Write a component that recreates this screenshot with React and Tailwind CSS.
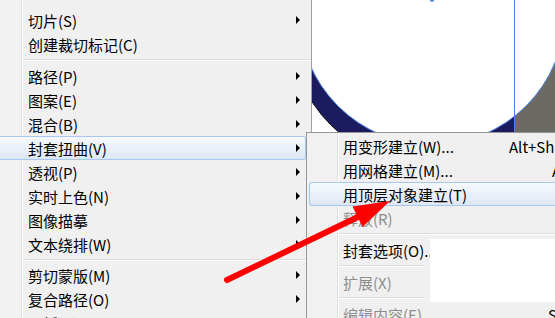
import React from "react";

function Arrow() {
  return <span className="block w-0 h-0 border-y-[4px] border-y-transparent border-l-[4px] border-l-black" />;
}

function MainRow({ label, arrow, hl }) {
  if (hl) {
    return (
      <div className="flex items-center justify-between h-6 pl-[28px] pr-[5px] mr-[5px] border border-l-0 border-[#a9c8ef] rounded-r-[3px] bg-[linear-gradient(to_bottom,#f6f9fd,#dde8f6)]">
        <span className="whitespace-nowrap">{label}</span>
        {arrow && <Arrow />}
      </div>
    );
  }
  return (
    <div className="flex items-center justify-between h-6 pl-[28px] pr-[6px] mr-[5px]">
      <span className="whitespace-nowrap">{label}</span>
      {arrow && <Arrow />}
    </div>
  );
}

function MainSep({ h }) {
  return (
    <div className={`ml-[24px] flex flex-col justify-center ${h === 7 ? "h-[7px]" : "h-[8px]"}`}>
      <div className="h-px bg-[#dcdcdc]" />
      <div className="h-px bg-white" />
    </div>
  );
}

export default function App() {
  return (
    <div className="relative w-[555px] h-[318px] overflow-hidden bg-white flex font-['Noto_Sans_CJK_SC',sans-serif] text-[15px] leading-none text-black">
      {/* main menu */}
      <div className="w-[312px] h-full shrink-0 border-r border-[#a0a0a0] pt-2 bg-[linear-gradient(to_right,#f1f1f1_21px,#e2e3e3_21px,#e2e3e3_22px,#ffffff_22px,#ffffff_23px,#f0f0f0_23px)]">
        <MainRow label="切片(S)" arrow />
        <MainRow label="创建裁切标记(C)" />
        <MainSep />
        <MainRow label="路径(P)" arrow />
        <MainRow label="图案(E)" arrow />
        <MainRow label="混合(B)" arrow />
        <MainRow label="封套扭曲(V)" arrow hl />
        <MainRow label="透视(P)" arrow />
        <MainRow label="实时上色(N)" arrow />
        <MainRow label="图像描摹" arrow />
        <MainRow label="文本绕排(W)" arrow />
        <MainSep h={7} />
        <MainRow label="剪切蒙版(M)" arrow />
        <MainRow label="复合路径(O)" arrow />
        <MainRow label="画板(A)" arrow />
      </div>

      {/* canvas */}
      <div className="flex-1 h-full bg-white">
        <svg width="243" height="318" viewBox="312 0 243 318" className="block">
          <circle cx="432" cy="24" r="143" fill="#1b1b5e" stroke="#111111" strokeWidth="1" />
          <rect x="514" y="0" width="41" height="140" fill="#6b6a65" />
          <circle cx="432" cy="12" r="133" fill="#ffffff" stroke="#4a7fe6" strokeWidth="1" />
          <line x1="514.5" y1="0" x2="514.5" y2="140" stroke="#4a80f0" strokeWidth="1" />
          <rect x="430" y="0" width="4" height="1.5" fill="#4a7fe6" />
        </svg>
      </div>

      {/* submenu */}
      <div className="absolute left-[306px] top-[132px] w-[300px] h-[200px] border border-[#979797] pt-px bg-[linear-gradient(to_right,#f1f1f1_30px,#e2e3e3_30px,#e2e3e3_31px,#ffffff_31px,#ffffff_32px,#f0f0f0_32px)]">
        <div className="flex items-center h-6 ml-[2px] pl-[34px]">
          <span className="w-[166px] shrink-0 whitespace-nowrap">用变形建立(W)...</span>
          <span className="whitespace-nowrap">Alt+Shift+Ctrl+W</span>
        </div>
        <div className="flex items-center h-6 ml-[2px] pl-[34px]">
          <span className="w-[166px] shrink-0 whitespace-nowrap">用网格建立(M)...</span>
          <span className="whitespace-nowrap pl-[43px]">Alt+Ctrl+M</span>
        </div>
        <div className="flex items-center h-6 ml-[2px] pl-[33px] border border-r-0 border-[#a9c8ef] rounded-l-[3px] bg-[linear-gradient(to_bottom,#f6f9fd,#dde8f6)]">
          <span className="whitespace-nowrap">用顶层对象建立(T)</span>
        </div>
        <div className="flex items-center h-6 ml-[2px] pl-[34px] text-[#8d8d8d]">
          <span className="whitespace-nowrap">释放(R)</span>
        </div>
        <div className="ml-[32px] h-[8px] flex flex-col justify-center">
          <div className="h-px bg-[#dcdcdc]" />
          <div className="h-px bg-white" />
        </div>
        <div className="flex items-center h-6 ml-[2px] pl-[34px]">
          <span className="whitespace-nowrap">封套选项(O)...</span>
        </div>
        <div className="ml-[32px] w-[86px] h-[8px] flex flex-col justify-center">
          <div className="h-px bg-[#dcdcdc]" />
          <div className="h-px bg-white" />
        </div>
        <div className="flex items-center h-6 ml-[2px] pl-[34px] text-[#8d8d8d]">
          <span className="whitespace-nowrap">扩展(X)</span>
        </div>
        <div className="ml-[32px] w-[86px] h-[8px] flex flex-col justify-center">
          <div className="h-px bg-[#dcdcdc]" />
          <div className="h-px bg-white" />
        </div>
        <div className="flex items-center h-6 ml-[2px] pl-[34px] text-[#8d8d8d]">
          <span className="w-[166px] shrink-0 whitespace-nowrap">编辑内容(E)</span>
          <span className="whitespace-nowrap pl-[39px] text-black">Shift+Ctrl+V</span>
        </div>
      </div>

      {/* pasted patch */}
      <div className="absolute left-[430px] top-[239px] w-[125px] h-[63px] bg-white" />

      {/* red annotation arrow */}
      <svg className="absolute inset-0 pointer-events-none" width="555" height="318" viewBox="0 0 555 318">
        <line x1="227" y1="280" x2="362" y2="215" stroke="#ff0000" strokeWidth="6" strokeLinecap="round" />
        <polygon points="390,201 352.5,206.5 362.5,227" fill="#ff0000" />
      </svg>
    </div>
  );
}
